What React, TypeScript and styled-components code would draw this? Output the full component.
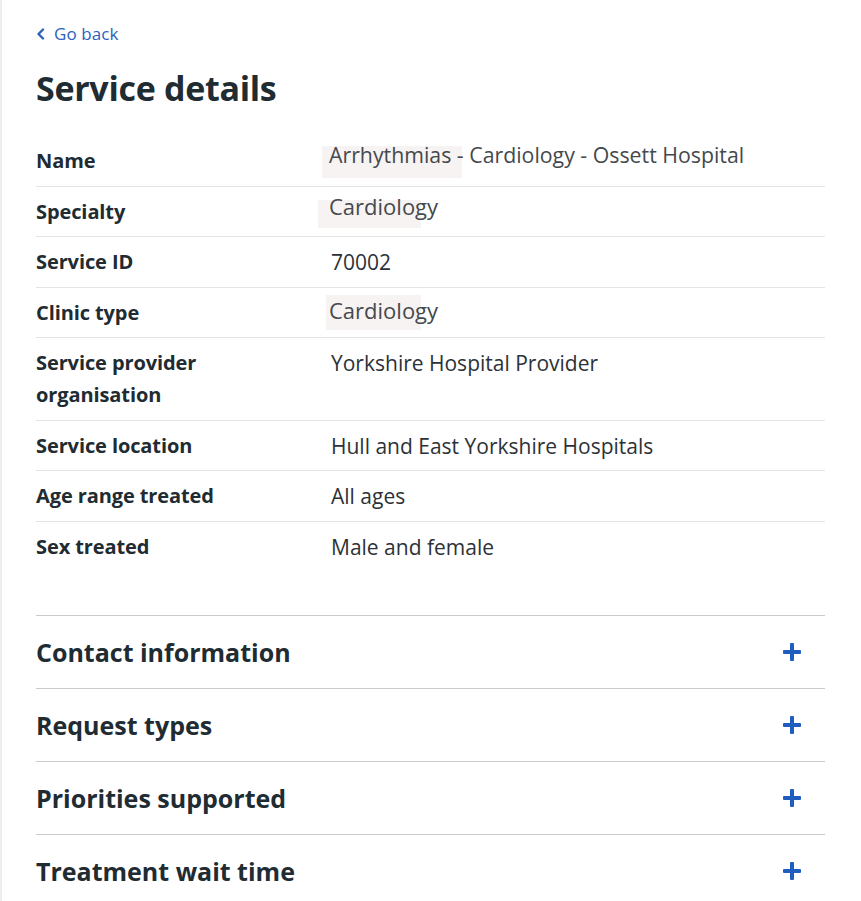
import React from "react";
import styled, { createGlobalStyle } from "styled-components";

const Global = createGlobalStyle`
  html, body { margin: 0; padding: 0; background: #ffffff; }
  body { font-family: "Open Sans", "Noto Sans", sans-serif; color: #212b32; -webkit-font-smoothing: antialiased; }
  * { box-sizing: border-box; }
`;

const Page = styled.div`
  min-height: 901px;
  border-left: 2px solid #eeeeee;
  padding: 23px 36px 0 34px;
  width: 861px;
`;

const BackLink = styled.a`
  display: inline-flex;
  align-items: center;
  gap: 9px;
  color: #2b62bb;
  font-size: 17px;
  line-height: 22px;
  letter-spacing: 0.1px;
  text-decoration: none;
`;

const Title = styled.h1`
  margin: 23px 0 0;
  font-size: 34px;
  line-height: 40px;
  font-weight: 700;
  letter-spacing: -0.3px;
  color: #212b32;
`;

const List = styled.dl`
  margin: 28px 0 0;
`;

const Row = styled.div<{ $last?: boolean }>`
  display: grid;
  grid-template-columns: 295px 1fr;
  padding: 9px 0 8.5px;
  border-bottom: ${(p) => (p.$last ? "none" : "1px solid #e3e4e5")};
`;

const Key = styled.dt`
  margin: 0;
  font-weight: 700;
  font-size: 20px;
  line-height: 32px;
  letter-spacing: -0.1px;
`;

const Value = styled.dd`
  margin: 0;
  font-size: 21px;
  line-height: 32px;
  color: #2c3237;
`;

type PatchProps = { $mt: number; $x: number; $y: number; $w: number; $h: number; $fs?: number };

const Patched = styled.div<PatchProps>`
  position: relative;
  z-index: 0;
  margin: ${(p) => p.$mt}px 0 0 -2px;
  font-size: ${(p) => p.$fs ?? 22}px;
  line-height: 32px;
  color: #45494d;
  &::before {
    content: "";
    position: absolute;
    left: ${(p) => p.$x + 2}px;
    top: ${(p) => p.$y}px;
    width: ${(p) => p.$w}px;
    height: ${(p) => p.$h}px;
    background: #f7f3f3;
    z-index: -1;
  }
`;

const Accordion = styled.div`
  margin-top: 44px;
`;

const Item = styled.div`
  display: flex;
  align-items: center;
  justify-content: space-between;
  height: 73px;
  border-top: 1px solid #c8cacc;
  padding-right: 24px;
`;

const ItemTitle = styled.h2`
  margin: 0;
  font-size: 25px;
  font-weight: 700;
  color: #212b32;
`;

const Plus = () => (
  <svg width="18" height="18" viewBox="0 0 18 18" aria-hidden>
    <rect x="7" y="0" width="4" height="18" rx="1" fill="#1f5dbf" />
    <rect x="0" y="7" width="18" height="4" rx="1" fill="#1f5dbf" />
  </svg>
);

const Chevron = () => (
  <svg width="9" height="12" viewBox="0 0 9 12" aria-hidden>
    <path d="M7 1.5 L2.5 6 L7 10.5" fill="none" stroke="#2b62bb" strokeWidth="2.4" strokeLinecap="round" strokeLinejoin="round" />
  </svg>
);

const rows: { k: React.ReactNode; v: React.ReactNode }[] = [
  {
    k: "Name",
    v: (
      <Patched $mt={-6} $x={-9} $y={7} $w={140} $h={32} $fs={21.3}>
        Arrhythmias - Cardiology - Ossett Hospital
      </Patched>
    ),
  },
  {
    k: "Specialty",
    v: (
      <Patched $mt={-6} $x={-13} $y={10} $w={103} $h={28}>
        Cardiology
      </Patched>
    ),
  },
  { k: "Service ID", v: "70002" },
  {
    k: "Clinic type",
    v: (
      <Patched $mt={-3} $x={-5} $y={1} $w={95} $h={35}>
        Cardiology
      </Patched>
    ),
  },
  {
    k: (
      <>
        Service provider
        <br />
        organisation
      </>
    ),
    v: "Yorkshire Hospital Provider",
  },
  { k: "Service location", v: "Hull and East Yorkshire Hospitals" },
  { k: "Age range treated", v: "All ages" },
  { k: "Sex treated", v: "Male and female" },
];

const sections = ["Contact information", "Request types", "Priorities supported", "Treatment wait time"];

export default function App() {
  return (
    <>
      <Global />
      <Page>
        <BackLink href="#">
          <Chevron />
          Go back
        </BackLink>
        <Title>Service details</Title>
        <List>
          {rows.map((r, i) => (
            <Row key={i} $last={i === rows.length - 1}>
              <Key>{r.k}</Key>
              <Value>{r.v}</Value>
            </Row>
          ))}
        </List>
        <Accordion>
          {sections.map((s) => (
            <Item key={s}>
              <ItemTitle>{s}</ItemTitle>
              <Plus />
            </Item>
          ))}
        </Accordion>
      </Page>
    </>
  );
}
